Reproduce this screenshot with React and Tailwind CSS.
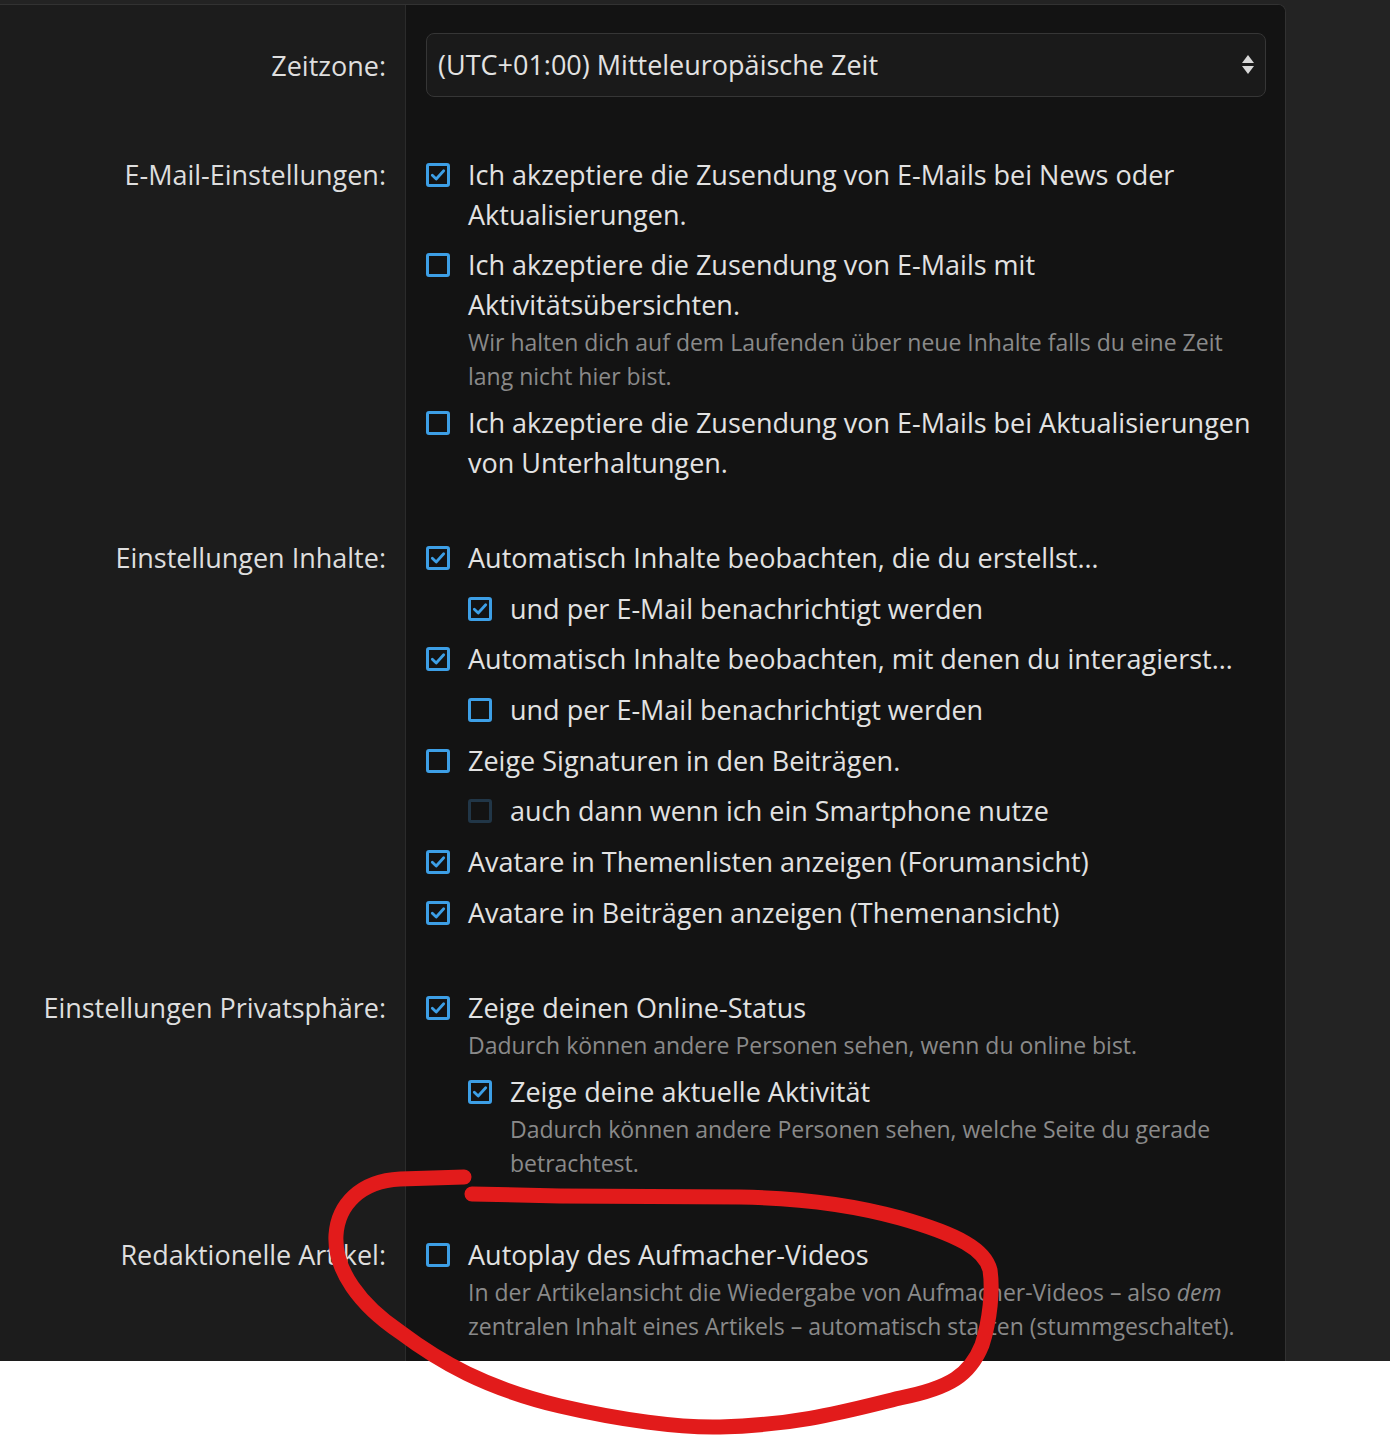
import React from "react";

const Check = ({ checked, disabled }) => (
  <span
    className={
      "mt-[8px] flex h-[24px] w-[24px] shrink-0 items-center justify-center rounded-[3px] border-[3px] " +
      (disabled ? "border-[#213647]" : "border-[#3d9fe6]")
    }
  >
    {checked && (
      <svg width="16" height="16" viewBox="0 0 16 16" fill="none">
        <path d="M2.3 8.3 L6.2 12 L13.7 3.8" stroke="#3d9fe6" strokeWidth="2.8" strokeLinecap="round" strokeLinejoin="round" />
      </svg>
    )}
  </span>
);

const Item = ({ checked, disabled, nested, children, desc }) => (
  <div className={"flex " + (nested ? "pl-[42px]" : "")}>
    <Check checked={checked} disabled={disabled} />
    <div className="ml-[18px]">
      <div className="text-[27px] leading-[40px] text-[#e2e2e2] whitespace-nowrap">{children}</div>
      {desc && (
        <div className="text-[23px] leading-[34px] text-[#8a8a8a] whitespace-nowrap">{desc}</div>
      )}
    </div>
  </div>
);

const Row = ({ label, children, first, labelLeading = "leading-[40px]" }) => (
  <div className="flex">
    <div className={"w-[406px] shrink-0 bg-[#1c1c1c] border-r border-[#2b2b2b] pr-[19px] text-right " + (first ? "pt-[28px] pb-[29px]" : "pt-[27px] pb-[28px]")}>
      <span className={"block text-[27px] text-[#dedede] whitespace-nowrap " + labelLeading}>{label}</span>
    </div>
    <div className={"flex-1 bg-[#131313] pl-[20px] pr-[19px] " + (first ? "pt-[28px] pb-[29px]" : "pt-[27px] pb-[28px]")}>
      {children}
    </div>
  </div>
);

export default function App() {
  return (
    <div className="relative h-[1439px] w-[1390px] overflow-hidden bg-white font-['Open_Sans',sans-serif]">
      <div className="h-[1361px] overflow-hidden bg-[#232323] pt-[4px]">
        <div className="h-[1400px] w-[1286px] overflow-hidden rounded-tr-[8px] border-t border-r border-[#323232] bg-[#131313]">
          <Row label="Zeitzone:" first labelLeading="leading-[66px]">
            <div className="flex h-[64px] items-center justify-between rounded-[8px] border border-[#363636] bg-[#1a1a1a] pl-[11px] pr-[10px]">
              <span className="text-[27px] text-[#e2e2e2]">(UTC+01:00) Mitteleuropäische Zeit</span>
              <svg width="14" height="24" viewBox="0 0 14 24">
                <path d="M7 2 L13 10 L1 10 Z" fill="#d8d8d8" />
                <path d="M1 13 L13 13 L7 21 Z" fill="#d8d8d8" />
              </svg>
            </div>
          </Row>

          <Row label="E-Mail-Einstellungen:">
            <div className="flex flex-col gap-[10px]">
              <Item checked>
                Ich akzeptiere die Zusendung von E-Mails bei News oder
                <br />
                Aktualisierungen.
              </Item>
              <Item
                desc={
                  <>
                    Wir halten dich auf dem Laufenden über neue Inhalte falls du eine Zeit
                    <br />
                    lang nicht hier bist.
                  </>
                }
              >
                Ich akzeptiere die Zusendung von E-Mails mit
                <br />
                Aktivitätsübersichten.
              </Item>
              <Item>
                Ich akzeptiere die Zusendung von E-Mails bei Aktualisierungen
                <br />
                von Unterhaltungen.
              </Item>
            </div>
          </Row>

          <Row label="Einstellungen Inhalte:">
            <div className="flex flex-col gap-[10.7px]">
              <Item checked>Automatisch Inhalte beobachten, die du erstellst…</Item>
              <Item checked nested>und per E-Mail benachrichtigt werden</Item>
              <Item checked>Automatisch Inhalte beobachten, mit denen du interagierst…</Item>
              <Item nested>und per E-Mail benachrichtigt werden</Item>
              <Item>Zeige Signaturen in den Beiträgen.</Item>
              <Item nested disabled>auch dann wenn ich ein Smartphone nutze</Item>
              <Item checked>Avatare in Themenlisten anzeigen (Forumansicht)</Item>
              <Item checked>Avatare in Beiträgen anzeigen (Themenansicht)</Item>
            </div>
          </Row>

          <Row label="Einstellungen Privatsphäre:">
            <div className="flex flex-col gap-[10px]">
              <Item checked desc="Dadurch können andere Personen sehen, wenn du online bist.">
                Zeige deinen Online-Status
              </Item>
              <Item
                checked
                nested
                desc={
                  <>
                    Dadurch können andere Personen sehen, welche Seite du gerade
                    <br />
                    betrachtest.
                  </>
                }
              >
                Zeige deine aktuelle Aktivität
              </Item>
            </div>
          </Row>

          <Row label="Redaktionelle Artikel:">
            <Item
              desc={
                <>
                  In der Artikelansicht die Wiedergabe von Aufmacher-Videos – also <em>dem</em>
                  <br />
                  zentralen Inhalt eines Artikels – automatisch starten (stummgeschaltet).
                </>
              }
            >
              Autoplay des Aufmacher-Videos
            </Item>
          </Row>
        </div>
      </div>

      <svg className="pointer-events-none absolute left-0 top-0" width="1390" height="1439" viewBox="0 0 1390 1439" fill="none">
        <path
          d="M464 1177 L400 1179 C360 1181 338 1205 336 1235 C334 1270 360 1305 400 1332 C440 1362 485 1388 560 1406 C620 1420 680 1428 720 1427 C800 1425 850 1410 900 1398 C950 1388 970 1375 982 1345 C990 1320 993 1290 990 1270 C985 1250 960 1235 900 1218 C850 1204 800 1198 740 1197 L560 1196 L472 1194"
          stroke="#e21b1b"
          strokeWidth="15"
          strokeLinecap="round"
          strokeLinejoin="round"
        />
      </svg>
    </div>
  );
}
